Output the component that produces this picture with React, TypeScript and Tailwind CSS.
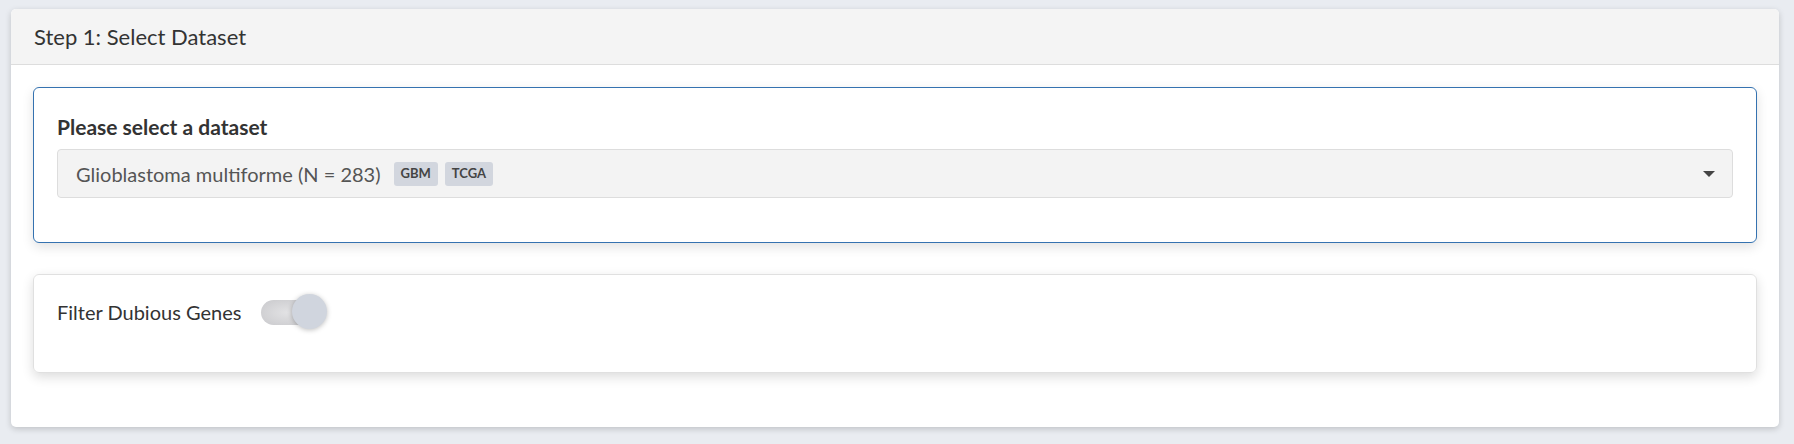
import { useState } from 'react';

export default function App() {
  const [filterDubious, setFilterDubious] = useState(false);

  return (
    <div className="min-h-[444px] bg-[#e9ecf1] pl-[11px] pr-[15px] pt-[9px] pb-[17px] font-['Lato','Noto_Sans',sans-serif] text-[#333]">
      {/* Step card */}
      <div className="h-[418px] rounded-[5px] bg-white shadow-[0_2px_6px_rgba(0,0,0,0.18)] overflow-hidden">
        <div className="h-[56px] flex items-center px-[23px] bg-[#f4f4f4] border-b border-[#dddddd]">
          <h3 className="text-[22px] text-[#333]">Step 1: Select Dataset</h3>
        </div>

        <div className="px-[22px] pt-[22px] flex flex-col gap-[31px]">
          {/* Dataset picker */}
          <div className="h-[156px] rounded-[6px] border border-[#3572b0] px-[23px] pt-[26px] shadow-[0_4px_12px_rgba(0,0,0,0.12)]">
            <label className="block text-[21px] leading-[26px] font-bold text-[#333]">Please select a dataset</label>
            <button className="mt-[9px] w-full h-[49px] flex items-center justify-between rounded-[4px] border border-[#dddddd] bg-[#f3f3f3] pl-[18px] pr-[17px] text-left">
              <span className="flex items-center gap-[7px]">
                <span className="text-[20px] text-[#555] mr-[6px]">Glioblastoma multiforme (N = 283)</span>
                <span className="h-[24px] px-[7px] flex items-center rounded-[3px] bg-[#d2d6de] text-[13px] font-bold text-[#444]">GBM</span>
                <span className="h-[24px] px-[7px] flex items-center rounded-[3px] bg-[#d2d6de] text-[13px] font-bold text-[#444]">TCGA</span>
              </span>
              <svg width="12" height="6" viewBox="0 0 12 6" className="shrink-0">
                <path d="M0 0 L12 0 L6 6 Z" fill="#444" />
              </svg>
            </button>
          </div>

          {/* Filter toggle */}
          <div className="h-[99px] rounded-[6px] border border-[#e0e0e0] px-[23px] pt-[19px] shadow-[0_4px_12px_rgba(0,0,0,0.14)]">
            <div className="flex items-center gap-[20px]">
              <span className="text-[20px] text-[#333]">Filter Dubious Genes</span>
              <button
                onClick={() => setFilterDubious(!filterDubious)}
                className="relative w-[66px] h-[36px] shrink-0"
              >
                <span className="absolute left-0 top-[6px] w-[52px] h-[25px] rounded-full bg-[radial-gradient(ellipse_at_center,#e2e2e4,#c9c9cc)]" />
                <span
                  className={
                    filterDubious
                      ? 'absolute left-[31px] top-0 w-[35px] h-[35px] rounded-full bg-[#3a78b5] shadow-[0_1px_5px_rgba(0,0,0,0.25)]'
                      : 'absolute left-[31px] top-0 w-[35px] h-[35px] rounded-full bg-[#d0d5de] shadow-[0_1px_5px_rgba(0,0,0,0.25)]'
                  }
                />
              </button>
            </div>
          </div>
        </div>
      </div>
    </div>
  );
}
